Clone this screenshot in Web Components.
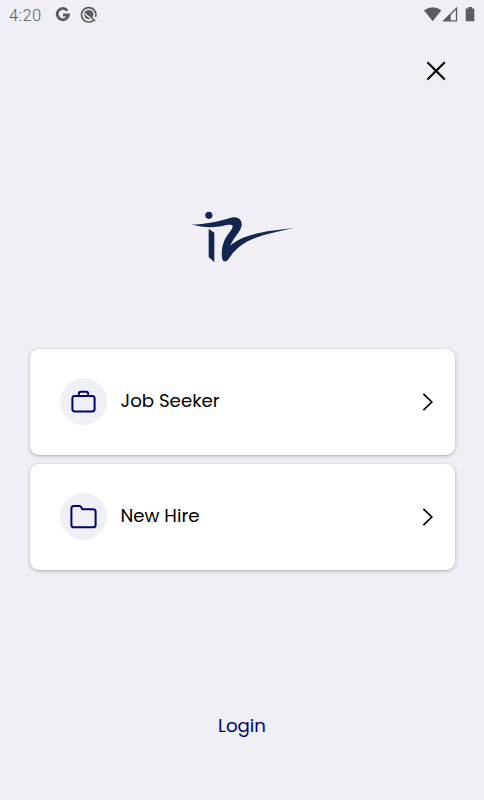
<!DOCTYPE html>
<html lang="en">
<head>
<meta charset="UTF-8">
<meta name="viewport" content="width=device-width, initial-scale=1.0">
<title>Welcome</title>
<style>
  body {
    margin: 0;
    background-color: #f0eff5;
    font-family: Poppins, Inter, sans-serif;
  }
</style>
</head>
<body>
<welcome-screen>
  <status-bar slot="status"></status-bar>
  <close-button></close-button>
  <brand-logo></brand-logo>
  <option-list>
    <option-card icon="briefcase">Job Seeker</option-card>
    <option-card icon="folder">New Hire</option-card>
  </option-list>
  <login-link>Login</login-link>
</welcome-screen>

<script>
class WelcomeScreen extends HTMLElement {
  connectedCallback() {
    this.attachShadow({ mode: 'open' });
    this.shadowRoot.innerHTML = `
      <style>
        :host {
          display: flex;
          flex-direction: column;
          height: 800px;
          overflow: hidden;
          background-color: #f0eff5;
        }
        main {
          display: flex;
          flex-direction: column;
          flex: 1;
        }
      </style>
      <slot name="status"></slot>
      <main><slot></slot></main>
    `;
  }
}

class StatusBar extends HTMLElement {
  connectedCallback() {
    this.attachShadow({ mode: 'open' });
    this.shadowRoot.innerHTML = `
      <style>
        :host {
          display: flex;
          align-items: center;
          height: 29px;
          padding: 0 8px 0 9px;
          color: #5c5c5f;
          font: 300 16.5px/29px Roboto, sans-serif;
        }
        .time {
          width: 46px;
          padding-top: 1px;
          letter-spacing: 0.4px;
        }
        .right {
          margin-left: auto;
        }
        svg {
          display: block;
        }
      </style>
      <span class="time">4:20</span>
      <svg width="44" height="18" viewBox="0 0 44 18" fill="none" stroke="currentColor">
        <path d="M12.4 4.6A5.7 5.7 0 1 0 13.5 9H8" stroke-width="2.8"/>
        <path d="M38.4 14.3A7.2 7.2 0 1 1 40.6 11" stroke-width="1.6"/>
        <circle cx="33.8" cy="8.6" r="4.7" fill="currentColor" stroke="none"/>
        <path d="M29.6 7.4L37 13.4" stroke="#f0eff5" stroke-width="1.3"/>
        <path d="M36 11l4.2 4" stroke-width="1.6"/>
      </svg>
      <svg class="right" width="52" height="18" viewBox="0 0 52 18" fill="currentColor">
        <path d="M0 4.2Q8.7 -1.8 17.4 4.2L8.7 15.2z"/>
        <path d="M19.9 14.8L32.5 2.2V14.8z" fill="none" stroke="currentColor" stroke-width="1.3"/>
        <path d="M19.3 15l7.4-7.4V15z"/>
        <path d="M44.2 1h3.8v1.5h2.3v12.8h-8.6V2.5h2.5z"/>
      </svg>
    `;
  }
}

class CloseButton extends HTMLElement {
  connectedCallback() {
    this.attachShadow({ mode: 'open' });
    this.shadowRoot.innerHTML = `
      <style>
        :host {
          display: flex;
          justify-content: flex-end;
          padding: 30px 36px 0 0;
        }
        button {
          padding: 0;
          border: none;
          background: none;
          cursor: pointer;
        }
        svg {
          display: block;
        }
      </style>
      <button aria-label="Close">
        <svg width="24" height="24" viewBox="0 0 24 24" stroke="#000" stroke-width="2.1">
          <path d="M3.4 3.2l17.4 17.2M20.8 3.2L3.4 20.4"/>
        </svg>
      </button>
    `;
  }
}

class BrandLogo extends HTMLElement {
  connectedCallback() {
    this.attachShadow({ mode: 'open' });
    this.shadowRoot.innerHTML = `
      <style>
        :host {
          display: flex;
          justify-content: center;
          padding: 122px 0 0 1px;
        }
        svg {
          display: block;
        }
      </style>
      <svg width="115" height="62" viewBox="0 0 345 186" fill="#14264f">
        <circle cx="71.5" cy="31" r="10.8"/>
        <path d="M19 59C58 57 105 49 138 38C160 33 172 45 170 61C167 81 145 99 136 122C165 96 210 80 326 70C270 81 217 93 188 109C158 125 143 144 130 163C124 172 113 172 111 158C108 137 113 113 125 94C135 79 146 69 142 61C137 55 113 64 89 66C63 69 43 63 19 59Z"/>
        <path d="M71 71L88 83V172L71 156Z"/>
      </svg>
    `;
  }
}

class OptionList extends HTMLElement {
  connectedCallback() {
    this.attachShadow({ mode: 'open' });
    this.shadowRoot.innerHTML = `
      <style>
        :host {
          display: flex;
          flex-direction: column;
          gap: 9.5px;
          padding: 82px 29.5px 0;
        }
      </style>
      <slot></slot>
    `;
  }
}

const icons = {
  briefcase: `
    <rect x="2.4" y="6.9" width="22.2" height="15.6" rx="2.4"/>
    <path d="M8.8 6.7V5.1Q8.8 2.8 11 2.8H16Q18.2 2.8 18.2 5.1V6.7"/>`,
  folder: `
    <path d="M1.4 4.4Q1.4 1.9 3.9 1.9H9.2Q10.2 1.9 10.8 2.8L12.4 5.3H23.2Q25.6 5.3 25.6 7.7V20.9Q25.6 23.3 23.2 23.3H3.9Q1.4 23.3 1.4 20.9Z"/>`
};

class OptionCard extends HTMLElement {
  connectedCallback() {
    this.attachShadow({ mode: 'open' });
    this.shadowRoot.innerHTML = `
      <style>
        :host {
          display: flex;
          align-items: center;
          box-sizing: border-box;
          height: 105.5px;
          padding: 0 19.5px 0 30.5px;
          border-radius: 9px;
          background-color: #fff;
          box-shadow: 0 1px 4px rgba(0, 0, 0, 0.24), 0 1px 1px rgba(0, 0, 0, 0.07);
          cursor: pointer;
        }
        .badge {
          display: flex;
          align-items: center;
          justify-content: center;
          width: 47px;
          height: 47px;
          border-radius: 50%;
          background-color: #f0eff5;
        }
        .label {
          flex: 1;
          margin: 0 0 2px 13.5px;
          color: #000;
          font-size: 18.2px;
          line-height: 26px;
        }
        svg {
          display: block;
        }
      </style>
      <span class="badge">
        <svg width="27" height="25" viewBox="0 0 27 25" fill="none" stroke="#00046f" stroke-width="2" stroke-linejoin="round">
          ${icons[this.getAttribute('icon')]}
        </svg>
      </span>
      <span class="label"><slot></slot></span>
      <svg width="14" height="20" viewBox="0 0 14 20" fill="none" stroke="#000" stroke-width="1.7">
        <path d="M2.4 1.8L10.8 10L2.4 18.2"/>
      </svg>
    `;
  }
}

class LoginLink extends HTMLElement {
  connectedCallback() {
    this.attachShadow({ mode: 'open' });
    this.shadowRoot.innerHTML = `
      <style>
        :host {
          display: flex;
          justify-content: center;
          margin-top: auto;
          padding-bottom: 61px;
        }
        a {
          color: #00046f;
          font-size: 18.2px;
          line-height: 26px;
          text-decoration: none;
        }
      </style>
      <a href="#login"><slot></slot></a>
    `;
  }
}

customElements.define('welcome-screen', WelcomeScreen);
customElements.define('status-bar', StatusBar);
customElements.define('close-button', CloseButton);
customElements.define('brand-logo', BrandLogo);
customElements.define('option-list', OptionList);
customElements.define('option-card', OptionCard);
customElements.define('login-link', LoginLink);
</script>
</body>
</html>
